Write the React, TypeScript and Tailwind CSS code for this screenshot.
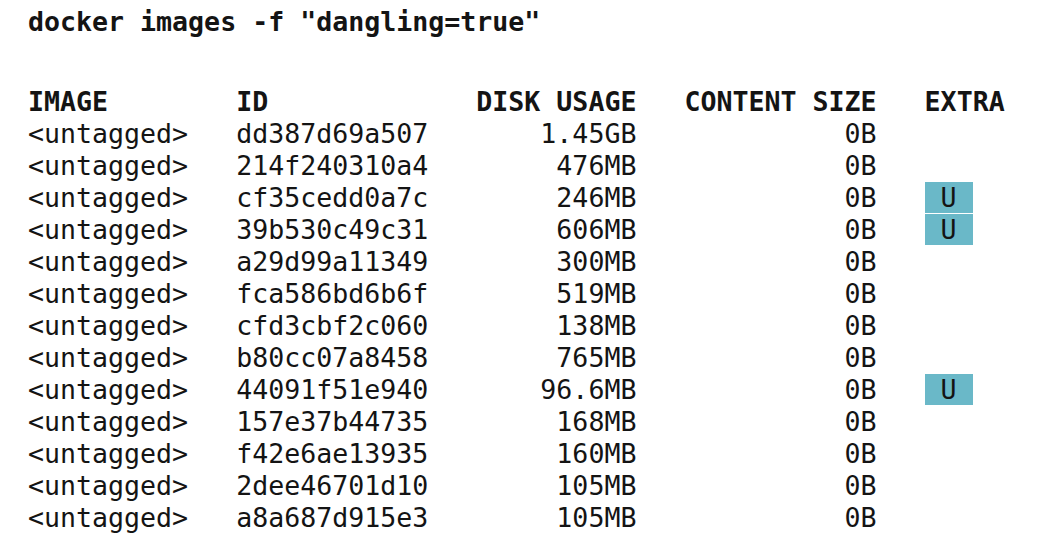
import React from "react";

const rows: [string, string, string, boolean][] = [
  ["dd387d69a507", "1.45GB", "0B", false],
  ["214f240310a4", "476MB", "0B", false],
  ["cf35cedd0a7c", "246MB", "0B", true],
  ["39b530c49c31", "606MB", "0B", true],
  ["a29d99a11349", "300MB", "0B", false],
  ["fca586bd6b6f", "519MB", "0B", false],
  ["cfd3cbf2c060", "138MB", "0B", false],
  ["b80cc07a8458", "765MB", "0B", false],
  ["44091f51e940", "96.6MB", "0B", true],
  ["157e37b44735", "168MB", "0B", false],
  ["f42e6ae13935", "160MB", "0B", false],
  ["2dee46701d10", "105MB", "0B", false],
  ["a8a687d915e3", "105MB", "0B", false],
];

function padEnd(s: string, n: number) {
  return s + " ".repeat(Math.max(0, n - s.length));
}
function padStart(s: string, n: number) {
  return " ".repeat(Math.max(0, n - s.length)) + s;
}

export default function App() {
  const header =
    padEnd("IMAGE", 13) +
    padEnd("ID", 15) +
    padStart("DISK USAGE", 10) +
    "   " +
    padStart("CONTENT SIZE", 12) +
    "   " +
    "EXTRA";
  return (
    <div
      className="w-[1042px] h-[554px] bg-white text-[#141414] overflow-hidden pl-[28px] pt-[6px]"
      style={{ fontFamily: '"DejaVu Sans Mono", monospace' }}
    >
      <div className="text-[26.6px] leading-[32px] font-bold whitespace-pre">
        docker images -f "dangling=true"
      </div>
      <div className="mt-[48px] text-[26.6px] leading-[32px] whitespace-pre">
        <div className="font-bold">{header}</div>
        {rows.map(([id, disk, content, u], i) => (
          <div key={i}>
            {padEnd("<untagged>", 13) +
              padEnd(id, 15) +
              padStart(disk, 10) +
              "   " +
              padStart(content, 12) +
              "   "}
            {u ? <span className="bg-[#6ab8c8]"> U </span> : null}
          </div>
        ))}
      </div>
    </div>
  );
}
